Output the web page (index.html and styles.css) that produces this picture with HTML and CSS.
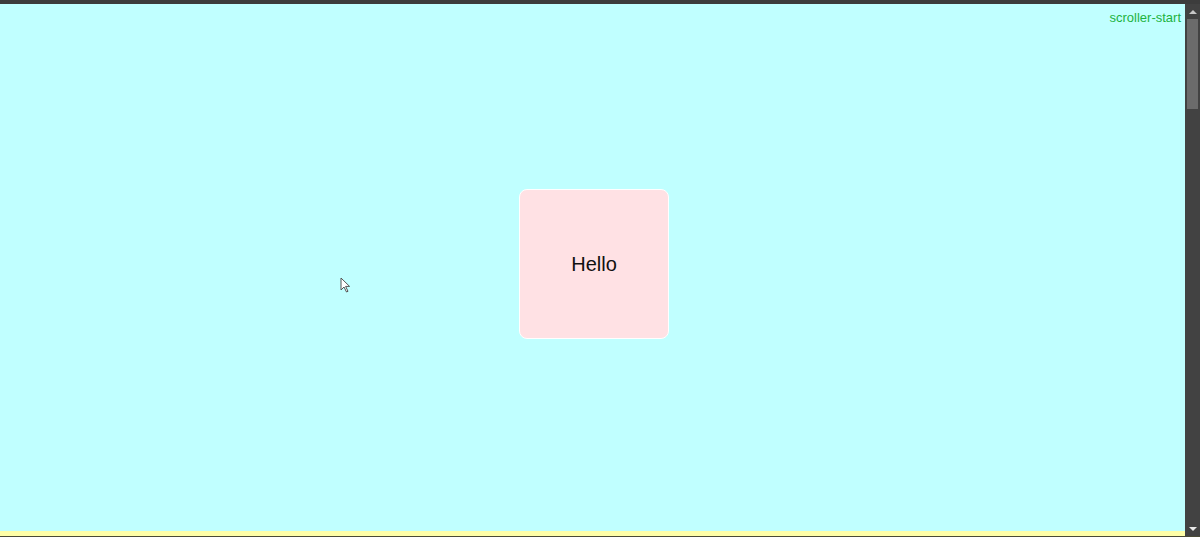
FILE: index.html
```html
<!DOCTYPE html>
<html lang="en">
<head>
    <meta charset="UTF-8">
    <meta name="viewport" content="width=device-width, initial-scale=1.0">
    <title>Scroller</title>
    <link rel="stylesheet" href="styles.css">
</head>
<body>
    <div class="frame">
        <div class="scroller">
            <div class="section section-start">
                <div class="marker">scroller-start</div>
                <div class="card">Hello</div>
            </div>
            <div class="section section-next"></div>
        </div>
        <!-- barra de rolagem desenhada -->
        <div class="scrollbar">
            <div class="arrow arrow-up"></div>
            <div class="track">
                <div class="thumb"></div>
            </div>
            <div class="arrow arrow-down"></div>
        </div>
        <svg class="cursor" width="12" height="18" viewBox="0 0 12 18">
            <path d="M1 1 L1 13 L4 10 L6.5 15 L8 14.3 L5.6 9.4 L9.6 9.4 Z" fill="#fff" stroke="#555" stroke-width="1"/>
        </svg>
    </div>
</body>
</html>
```

FILE: styles.css
```css
html, body {
    margin: 0;
    padding: 0;
}
body {
    font-family: "Liberation Sans", Arial, sans-serif;
    background-color: #3c3c3c;
}
.frame {
    position: relative;
    display: flex;
    height: 537px;
    box-sizing: border-box;
    border-top: 4px solid #3c3c3c;
    border-bottom: 1px solid #4b4b38;
}
.scroller {
    flex: 1;
    overflow: hidden;
    background-color: #c0ffff;
}
.section {
    height: 527px;
}
.section-start {
    display: flex;
    flex-direction: column;
    align-items: center;
    box-sizing: border-box;
    padding-top: 184px;
}
.section-next {
    height: 2400px;
    background-color: #ffffa8;
}
.marker {
    align-self: flex-end;
    margin-top: -178px;
    margin-right: 4px;
    margin-bottom: 163px;
    font-size: 13px;
    line-height: 16px;
    color: #1db341;
}
.card {
    display: flex;
    align-items: center;
    justify-content: center;
    width: 150px;
    height: 150px;
    margin-left: 3px;
    box-sizing: border-box;
    border: 1px solid #ffffff;
    border-radius: 8px;
    background-color: #ffe1e4;
    font-size: 20px;
    color: #111;
}
.scrollbar {
    display: flex;
    flex-direction: column;
    width: 15px;
    background-color: #424242;
}
.arrow {
    height: 15px;
    display: flex;
    align-items: center;
    justify-content: center;
}
.arrow-up::before,
.arrow-down::before {
    content: "";
    width: 0;
    height: 0;
    border-left: 4px solid transparent;
    border-right: 4px solid transparent;
}
.arrow-up::before {
    border-bottom: 4px solid #c8c8c8;
}
.arrow-down::before {
    border-top: 4px solid #e8e8e8;
}
.track {
    flex: 1;
}
.thumb {
    height: 90px;
    margin: 0 2px;
    background-color: #6b6b6b;
}
.cursor {
    position: absolute;
    left: 340px;
    top: 273px;
}
```
